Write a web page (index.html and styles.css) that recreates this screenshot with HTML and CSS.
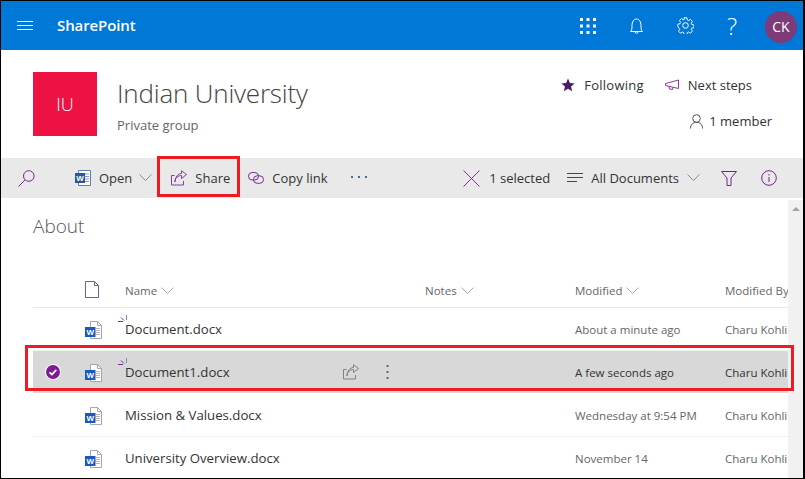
FILE: index.html
```html
<!DOCTYPE html>
<html lang="en">
<head>
<meta charset="utf-8">
<title>Indian University - SharePoint</title>
<link rel="stylesheet" href="styles.css">
</head>
<body>
<svg class="defs" width="0" height="0" aria-hidden="true">
  <symbol id="word" viewBox="0 0 18 18">
    <path d="M5.500.5h7l4 4v13h-11z" fill="#fff" stroke="#a6a6a6"/>
    <path d="M12.500.5v4h4" fill="none" stroke="#a6a6a6"/>
    <path d="M11 7.500h4M11 9.500h4M11 11.500h4M11 13.500h4" stroke="#b5b5b5"/>
    <rect x="0" y="6" width="10.500" height="10" fill="#185abd"/>
  </symbol>
  <symbol id="share" viewBox="0 0 16 16">
    <path d="M.5 5.500v9.500h12v-4M.5 5.500h3M4 12c0-4 3-6.500 6.500-6.500V8.500L15.500 4.500 10.500.8v2.700C7 3.500 4 7 4 12z" fill="none" stroke="currentColor" stroke-width=".9"/>
  </symbol>
  <symbol id="chev" viewBox="0 0 13 8">
    <path d="M.5.5l6 6 6-6" fill="none" stroke="currentColor"/>
  </symbol>
  <symbol id="sparkle" viewBox="0 0 10 8">
    <path d="M0 6.500h5M3 2.500l3 3" fill="none" stroke="#7a2a93"/>
    <path d="M8.500 0v5" fill="none" stroke="#6f8fc0"/>
  </symbol>
</svg>

<div class="frame">
  <header class="suite">
    <svg class="hamburger" width="16" height="10" viewBox="0 0 16 10"><path d="M0 .5h16M0 4.500h16M0 8.500h16" stroke="#fff"/></svg>
    <span class="brand">SharePoint</span>
    <div class="suite-right">
      <svg class="s-grid" width="16" height="16" viewBox="0 0 16 16" fill="#fff"><rect x="0" y="0" width="3" height="3"/><rect x="6.500" y="0" width="3" height="3"/><rect x="13" y="0" width="3" height="3"/><rect x="0" y="6.500" width="3" height="3"/><rect x="6.500" y="6.500" width="3" height="3"/><rect x="13" y="6.500" width="3" height="3"/><rect x="0" y="13" width="3" height="3"/><rect x="6.500" y="13" width="3" height="3"/><rect x="13" y="13" width="3" height="3"/></svg>
      <svg class="s-bell" width="13" height="16" viewBox="0 0 13 16" fill="none" stroke="#fff"><path d="M.5 13.500c1.500-1.500 1.500-3 1.500-6 0-3.500 1.700-6.500 4.500-6.500S11 4 11 7.500c0 3 0 4.500 1.500 6z"/><path d="M5 14c0 1.800 3 1.800 3 0"/></svg>
      <svg class="s-gear" width="17" height="17" viewBox="0 0 17 17" fill="none" stroke="#fff"><path d="M7 .5h3l.5 2.300 1.300.6 2-1.200 2 2.200-1.200 1.900.5 1.300 2.300.5v2.800l-2.300.5-.5 1.300 1.200 2-2.100 2-1.900-1.200-1.300.5-.5 2.300H7l-.5-2.300-1.300-.5-2 1.200-2-2 1.200-2-.6-1.300L.5 10V7.200l2.300-.5.6-1.300-1.200-2 2-2 2 1.200 1.300-.6z" transform="translate(.4 .3) scale(.95)"/><circle cx="8.500" cy="8.500" r="2.800"/></svg>
      <span class="s-help">?</span>
      <span class="avatar">CK</span>
    </div>
  </header>

  <section class="site">
    <div class="site-logo">IU</div>
    <div class="site-name">
      <h1>Indian University</h1>
      <p>Private group</p>
    </div>
    <div class="site-meta">
      <div class="meta-top">
        <span class="meta-item meta-follow">
          <svg width="14" height="14" viewBox="0 0 14 14"><path d="M7 .5l1.900 4.500 4.800.4-3.700 3.100 1.200 4.800L7 10.700l-4.200 2.600L4 8.500.3 5.400l4.800-.4z" fill="#4a1a63"/></svg>
          Following
        </span>
        <span class="meta-item">
          <svg width="15" height="12" viewBox="0 0 15 12" fill="none" stroke="#8a3a9c"><path d="M.5 4.500l13-3.500v8.500l-13-3zM4 7.500l.5 2.500 3 .5.500-2"/></svg>
          Next steps
        </span>
      </div>
      <span class="meta-item meta-member">
        <svg width="13" height="15" viewBox="0 0 13 15" fill="none" stroke="#555"><circle cx="6.500" cy="4.500" r="3.800"/><path d="M.5 14.500c0-4 2.500-6.200 6-6.200s6 2.200 6 6.200"/></svg>
        1 member
      </span>
    </div>
  </section>

  <nav class="command">
    <svg class="c-search" width="17" height="17" viewBox="0 0 17 17" fill="none" stroke="#7a2a93"><circle cx="10.800" cy="6" r="5.300"/><path d="M7 10L.5 16.500"/></svg>
    <svg class="c-word" width="16" height="16" viewBox="0 0 16 16"><path d="M3.500.5h12v15h-12z" fill="#fff" stroke="#5b7fb5"/><path d="M10 4h4M10 6.500h4M10 9h4M10 11.500h4" stroke="#7f9bc7"/><rect x="0" y="3" width="10" height="10" fill="#2b579a"/><text x="5" y="11" text-anchor="middle" class="w">W</text></svg>
    <span class="c-label c-open">Open</span>
    <svg class="c-chev" width="13" height="8"><use href="#chev"/></svg>
    <svg class="c-share" width="16" height="16"><use href="#share"/></svg>
    <span class="c-label c-sharelabel">Share</span>
    <svg class="c-link" width="16" height="12" viewBox="0 0 16 12" fill="none" stroke="#7a2a93"><rect x=".5" y=".5" width="10" height="7.500" rx="3.700"/><rect x="5.500" y="3.800" width="10" height="7.500" rx="3.700"/></svg>
    <span class="c-label">Copy link</span>
    <svg class="c-more" width="17" height="3" viewBox="0 0 17 3" fill="#4d6a8c"><rect x="0" y="0" width="2" height="2"/><rect x="7" y="0" width="2" height="2"/><rect x="14" y="0" width="2" height="2"/></svg>
    <div class="c-right">
      <svg class="c-x" width="17" height="17" viewBox="0 0 17 17" stroke="#7a3a93"><path d="M.5.500l16 16M16.500.5l-16 16"/></svg>
      <span class="c-label">1 selected</span>
      <svg class="c-lines" width="16" height="10" viewBox="0 0 16 10" stroke="#7a1f93"><path d="M0 .5h16M0 4.500h16M0 8.500h10"/></svg>
      <span class="c-label">All Documents</span>
      <svg class="c-chev2" width="13" height="8"><use href="#chev"/></svg>
      <svg class="c-filter" width="16" height="15" viewBox="0 0 16 15" fill="none" stroke="#7a1f93"><path d="M.5.500h15L10 7v7.500H6V7z"/></svg>
      <svg class="c-info" width="16" height="16" viewBox="0 0 16 16" fill="none" stroke="#7a1f93"><circle cx="8" cy="8" r="7.300"/><path d="M8 7v5M8 4v1.500"/></svg>
    </div>
  </nav>

  <div class="content-wrap">
    <main class="content">
      <h2>About</h2>
      <div class="row head">
        <span></span>
        <svg width="14" height="17" viewBox="0 0 14 17" fill="none" stroke="#7a5a8a"><path d="M.5.500h9l4 4v12H.5z"/><path d="M9.500.5v4h4"/></svg>
        <span class="h-cell">Name <svg width="13" height="8"><use href="#chev"/></svg></span>
        <span></span>
        <span class="h-cell">Notes <svg width="13" height="8"><use href="#chev"/></svg></span>
        <span class="h-cell">Modified <svg width="13" height="8"><use href="#chev"/></svg></span>
        <span class="h-cell">Modified By</span>
      </div>
      <div class="row">
        <span></span>
        <svg class="doc" width="18" height="18" viewBox="0 0 18 18"><use href="#word"/><text x="5.200" y="14" text-anchor="middle" class="w">W</text></svg>
        <span class="name"><svg class="spark" width="10" height="8"><use href="#sparkle"/></svg>Document.docx</span>
        <span></span><span></span>
        <span class="small">About a minute ago</span>
        <span class="small">Charu Kohli</span>
      </div>
      <div class="row selected">
        <svg class="check" width="16" height="16" viewBox="0 0 16 16"><circle cx="8" cy="8" r="8" fill="#fff"/><circle cx="8" cy="8" r="7" fill="#7f1a96"/><path d="M4.500 8.300l2.400 2.200 4.400-4.600" fill="none" stroke="#fff" stroke-width="1.700"/></svg>
        <svg class="doc" width="18" height="18" viewBox="0 0 18 18"><use href="#word"/><text x="5.200" y="14" text-anchor="middle" class="w">W</text></svg>
        <span class="name"><svg class="spark" width="10" height="8"><use href="#sparkle"/></svg>Document1.docx</span>
        <span class="row-actions">
          <svg width="16" height="16"><use href="#share"/></svg>
          <svg width="3" height="15" viewBox="0 0 3 15" fill="#666"><rect x="0.500" y="0" width="2" height="2"/><rect x="0.500" y="6" width="2" height="2"/><rect x="0.500" y="12" width="2" height="2"/></svg>
        </span>
        <span></span>
        <span class="small">A few seconds ago</span>
        <span class="small">Charu Kohli</span>
      </div>
      <div class="row">
        <span></span>
        <svg class="doc" width="18" height="18" viewBox="0 0 18 18"><use href="#word"/><text x="5.200" y="14" text-anchor="middle" class="w">W</text></svg>
        <span class="name">Mission &amp; Values.docx</span>
        <span></span><span></span>
        <span class="small">Wednesday at 9:54 PM</span>
        <span class="small">Charu Kohli</span>
      </div>
      <div class="row">
        <span></span>
        <svg class="doc" width="18" height="18" viewBox="0 0 18 18"><use href="#word"/><text x="5.200" y="14" text-anchor="middle" class="w">W</text></svg>
        <span class="name">University Overview.docx</span>
        <span></span><span></span>
        <span class="small">November 14</span>
        <span class="small">Charu Kohli</span>
      </div>
    </main>
    <aside class="scrollbar"><span class="arrow"></span></aside>
  </div>

  <div class="mark mark-share"></div>
  <div class="mark mark-row"></div>
</div>
</body>
</html>
```

FILE: styles.css
```css
* { box-sizing: border-box; }
html, body { margin: 0; padding: 0; background: #fff; }
body { font-family: "Open Sans", "Noto Sans", "Liberation Sans", sans-serif; color: #333; }
.defs { position: absolute; }
.w { font: 700 8px "Liberation Sans", sans-serif; fill: #fff; }

.frame {
  position: relative;
  width: 805px;
  height: 479px;
  overflow: hidden;
  display: flex;
  flex-direction: column;
  border: solid #000;
  border-width: 1px 2px 1px 1px;
}

.suite {
  flex: 0 0 49px;
  background: #0078d7;
  display: flex;
  align-items: center;
  color: #fff;
}
.hamburger { margin-left: 16px; }
.brand { margin: -1px 0 0 24px; font-size: 15px; font-weight: 600; letter-spacing: -.1px; }
.suite-right { margin-left: auto; display: flex; align-items: center; padding-right: 6px; }
.s-grid { margin-right: 34px; }
.s-bell { margin-right: 34px; }
.s-gear { margin-right: 33px; }
.s-help { font-size: 24px; font-weight: 300; margin-right: 28px; line-height: 1; }
.avatar {
  width: 32px; height: 32px; border-radius: 50%;
  background: #7f3a78; color: #fff; font-size: 14px;
  display: flex; align-items: center; justify-content: center;
  margin-top: 2px;
}

.site { flex: 0 0 108px; display: flex; padding: 22px 0 0 32px; }
.site-logo {
  width: 64px; height: 64px; background: #ed1144; color: #fff;
  font-size: 18px; font-weight: 300;
  display: flex; align-items: center; justify-content: center;
}
.site-name { margin-left: 20px; }
.site-name h1 { margin: 1px 0 0; font-size: 26px; font-weight: 300; line-height: 40px; color: #444; letter-spacing: -.2px; }
.site-name p { margin: 2px 0 0; font-size: 13px; color: #666; line-height: 20px; }
.site-meta { margin-left: auto; padding-right: 31px; display: flex; flex-direction: column; align-items: flex-end; font-size: 13px; color: #333; }
.meta-top { display: flex; gap: 21px; margin: 3px 20px 0 0; }
.meta-item { display: flex; align-items: center; gap: 8px; line-height: 20px; white-space: nowrap; }
.meta-follow { gap: 9px; letter-spacing: .25px; }
.meta-member { margin-top: 16px; gap: 6px; }

.command {
  flex: 0 0 40px;
  background: #e9e9e9;
  display: flex;
  align-items: center;
  font-size: 13px;
  color: #333;
}
.c-search { margin-left: 17px; }
.c-word { margin-left: 40px; }
.c-label { white-space: nowrap; }
.c-open { margin-left: 8px; }
.c-chev { margin-left: 7px; color: #8a8a8a; }
.c-share { margin-left: 19px; color: #7a2a93; }
.c-sharelabel { margin-left: 8px; }
.c-link { margin: 0 8px 0 18px; }
.c-more { margin-left: 23px; margin-top: -1px; }
.c-right { margin-left: auto; display: flex; align-items: center; padding-right: 26px; }
.c-x { margin-right: 9px; }
.c-lines { margin: 0 8px 0 17px; }
.c-chev2 { margin-left: 8px; color: #8a8a8a; }
.c-filter { margin-left: 21px; }
.c-info { margin-left: 24px; }

.content-wrap { flex: 1; min-height: 0; display: flex; margin-top: 1px; border-top: 1px solid #fff; }
.content { flex: 1; min-width: 0; overflow: hidden; padding-left: 32px; }
.content h2 { margin: 12px 0 0; font-size: 19px; font-weight: 300; line-height: 28px; color: #555; }
.scrollbar { flex: 0 0 15px; background: #f1f1f1; display: flex; justify-content: center; padding-top: 7px; }
.arrow { width: 0; height: 0; border: solid transparent; border-width: 0 4px 4px; border-bottom-color: #a3a3a3; }

.row {
  display: grid;
  grid-template-columns: 52px 40px 212px 88px 150px 150px 1fr;
  align-items: center;
  height: 43px;
  border-bottom: 1px solid #f1f1f1;
  white-space: nowrap;
}
.row > svg { justify-self: start; }
.row .check { margin-left: 12px; }
.row .doc { margin-top: 2px; }
.head { margin-top: 26px; height: 42px; padding-top: 8px; border-bottom-color: #eaeaea; font-size: 11.500px; color: #666; }
.head > svg { margin-top: -2px; }
.h-cell { display: flex; align-items: center; gap: 4px; color: #666; }
.h-cell svg { color: #a6a6a6; }
.name { position: relative; font-size: 13.200px; color: #333; }
.spark { position: absolute; left: -7px; top: -5px; }
.small { font-size: 11.500px; color: #666; overflow: hidden; }
.selected { background: #d8d8d8; height: 42px; margin-bottom: 1px; border-bottom: 0; }
.selected .small { color: #333; }
.row-actions { display: flex; align-items: center; gap: 27px; color: #777; margin-left: 6px; }

.mark { position: absolute; border: 3px solid #ed1c24; pointer-events: none; }
.mark-share { left: 156px; top: 155px; width: 83px; height: 41px; }
.mark-row { left: 24px; top: 344px; width: 769px; height: 46px; }
```
